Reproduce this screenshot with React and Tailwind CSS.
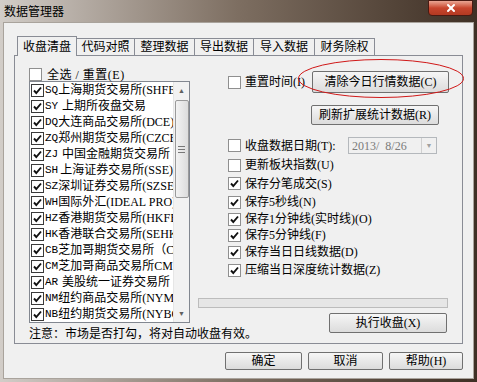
import { X } from 'lucide-react'

const markets = [
    ['SQ', '上海期货交易所(SHFE)'],
    ['SY', '上期所夜盘交易'],
    ['DQ', '大连商品交易所(DCE)'],
    ['ZQ', '郑州期货交易所(CZCE)'],
    ['ZJ', '中国金融期货交易所'],
    ['SH', '上海证券交易所(SSE)'],
    ['SZ', '深圳证券交易所(SZSE)'],
    ['WH', '国际外汇(IDEAL PRO)'],
    ['HZ', '香港期货交易所(HKFE)'],
    ['HK', '香港联合交易所(SEHK)'],
    ['CB', '芝加哥期货交易所（CBOT)'],
    ['CM', '芝加哥商品交易所CME'],
    ['AR', '美股统一证券交易所'],
    ['NM', '纽约商品交易所(NYMEX)'],
    ['NB', '纽约期货交易所(NYBOT)'],
]

const tabs = [
    ['收盘清盘', 'w-[60px]'],
    ['代码对照', 'w-[58px]'],
    ['整理数据', 'w-[60px]'],
    ['导出数据', 'w-[59px]'],
    ['导入数据', 'w-[61px]'],
    ['财务除权', 'w-[60px]'],
]

// 右侧选项：标签 + 行高（按截图量出来的间距）
const options = [
    ['更新板块指数(U)', false, 'h-[18px]'],
    ['保存分笔成交(S)', true, 'h-[19px]'],
    ['保存5秒线(N)', true, 'h-[18px]'],
    ['保存1分钟线(实时线)(O)', true, 'h-[16px]'],
    ['保存5分钟线(F)', true, 'h-[16px]'],
    ['保存当日日线数据(D)', true, 'h-[18px]'],
    ['压缩当日深度统计数据(Z)', true, 'h-[18px]'],
]

function Check({ checked, dark }) {
    return (
        <span
            className={`w-[13px] h-[13px] shrink-0 flex items-center justify-center bg-white border ${dark ? 'border-[#3a3a3a]' : 'border-[#8f8f8f]'}`}
        >
            {checked && (
                <svg width="11" height="11" viewBox="0 0 11 11">
                    <path d="M2 5.5 L4.3 8 L9 2.5" stroke="#111" strokeWidth="1.9" fill="none" />
                </svg>
            )}
        </span>
    )
}

function Button({ children, className = '' }) {
    return (
        <button
            className={`flex items-center justify-center whitespace-nowrap rounded-[2px] border border-[#707070] bg-gradient-to-b from-[#f6f6f6] to-[#dcdcdc] text-black ${className}`}
        >
            {children}
        </button>
    )
}

export default function App() {
    return (
        <div className="relative w-[477px] h-[382px] overflow-hidden flex flex-col bg-gradient-to-r from-[#d2cdc8] via-[#7d6e61] to-[#3f3025] font-['Liberation_Serif','Noto_Sans_CJK_SC',serif] text-[12px] leading-[14px] text-black">
            {/* 标题栏 */}
            <div className="h-[22px] flex items-center pl-[4px] font-['Noto_Sans_CJK_SC',sans-serif] text-[12px]">
                数据管理器
            </div>
            <div className="absolute top-0 right-[4px] w-[45px] h-[16px] rounded-b-[4px] border border-[#4a1a12] bg-gradient-to-b from-[#e9a593] via-[#c8452d] to-[#b33a22] flex items-center justify-center">
                <X size={12} strokeWidth={4} className="text-white" />
            </div>

            {/* 客户区 */}
            <div className="mx-[3px] h-[357px] bg-[#f0f0f0] border border-[#a9a39c] pt-[12px] px-[10px]">
                {/* 选项卡 */}
                <div className="flex items-end h-[20px] pl-[3px]">
                    {tabs.map(([name, w], i) => (
                        <div
                            key={name}
                            className={
                                i === 0
                                    ? `${w} h-[20px] -mb-px relative z-10 bg-[#f0f0f0] border border-b-0 border-[#898c95] flex items-center justify-center`
                                    : `${w} h-[17px] border border-b-0 border-l-0 border-[#898c95] bg-[#f0f0f0] flex items-center justify-center`
                            }
                        >
                            {name}
                        </div>
                    ))}
                </div>

                <div className="h-[289px] border border-[#898c95] flex">
                    {/* 左侧：市场列表 */}
                    <div className="w-[177px] shrink-0 pl-[14px] pt-[12px]">
                        <div className="h-[13px] flex items-center gap-[5px] whitespace-nowrap">
                            <Check />
                            <span className="tracking-[0.5px]">全选 / 重置(E)</span>
                        </div>
                        <div className="w-[161px] h-[242px] border border-[#828790] bg-white flex">
                            <div className="flex-1 min-w-0 overflow-hidden">
                                {markets.map(([code, name]) => (
                                    <div key={code} className="h-[16px] flex items-center pl-px whitespace-nowrap">
                                        <Check checked dark />
                                        <span className="w-[18px] pl-px font-['Liberation_Mono',monospace] text-[11px]">{code}</span>
                                        <span>{name}</span>
                                    </div>
                                ))}
                            </div>
                            <div className="w-[16px] shrink-0 bg-[#f2f2f2] border-l border-[#e6e6e6] flex flex-col items-center">
                                <div className="h-[17px] flex items-center justify-center text-[#606060] text-[7px]">▲</div>
                                <div className="mt-px w-[14px] h-[98px] rounded-[2px] border border-[#9a9a9a] bg-gradient-to-r from-[#f3f3f3] to-[#dcdcdc] flex flex-col items-center justify-center gap-[2px]">
                                    <span className="w-[7px] h-px bg-[#777]" />
                                    <span className="w-[7px] h-px bg-[#777]" />
                                    <span className="w-[7px] h-px bg-[#777]" />
                                </div>
                                <div className="flex-1" />
                                <div className="h-[17px] flex items-center justify-center text-[#606060] text-[7px]">▼</div>
                            </div>
                        </div>
                        <div className="mt-[3px] h-[16px] flex items-center whitespace-nowrap">
                            注意：市场是否打勾，将对自动收盘有效。
                        </div>
                    </div>

                    {/* 右侧：选项 */}
                    <div className="flex-1 flex flex-col pt-[15px] whitespace-nowrap">
                        <div className="h-[22px] flex items-center pl-[36px]">
                            <Check />
                            <span className="ml-[4px] w-[67px]">重置时间(I)</span>
                            <Button className="w-[137px] h-[22px]">清除今日行情数据(C)</Button>
                        </div>
                        <Button className="mt-[12px] ml-[119px] w-[128px] h-[20px]">刷新扩展统计数据(R)</Button>
                        <div className="mt-[12px] h-[17px] flex items-center pl-[36px]">
                            <Check />
                            <span className="ml-[4px] w-[103px]">收盘数据日期(T):</span>
                            <div className="w-[89px] h-[17px] border border-[#b4b8bc] bg-[#f0f0f0] flex items-center">
                                <span className="flex-1 pl-[3px] text-[#7a7a7a] whitespace-pre">2013/  8/26</span>
                                <span className="w-[15px] h-[15px] border-l border-[#d0d0d0] flex items-center justify-center text-[#a0a0a0] text-[7px]">▼</span>
                            </div>
                        </div>
                        <div className="mt-[2px]">
                            {options.map(([label, on, h]) => (
                                <div key={label} className={`${h} flex items-center pl-[36px]`}>
                                    <Check checked={on} />
                                    <span className="ml-[4px]">{label}</span>
                                </div>
                            ))}
                        </div>
                        <div className="mt-[19px] ml-[6px] w-[250px] h-[10px] border border-[#bcbcbc] bg-[#e6e6e6]" />
                        <Button className="mt-[5px] ml-[137px] w-[118px] h-[20px]">执行收盘(X)</Button>
                    </div>
                </div>

                {/* 底部按钮 */}
                <div className="mt-[8px] flex justify-end gap-[6px]">
                    <Button className="w-[77px] h-[18px]">确定</Button>
                    <Button className="w-[75px] h-[18px]">取消</Button>
                    <Button className="w-[74px] h-[18px]">帮助(H)</Button>
                </div>
            </div>
            <div className="flex-1" />

            {/* 红色标注圈 */}
            <svg className="absolute left-[297px] top-[58px] pointer-events-none" width="168" height="41">
                <ellipse cx="84" cy="20.5" rx="82.5" ry="19" stroke="#d01818" strokeWidth="1" fill="none" />
            </svg>
        </div>
    )
}
